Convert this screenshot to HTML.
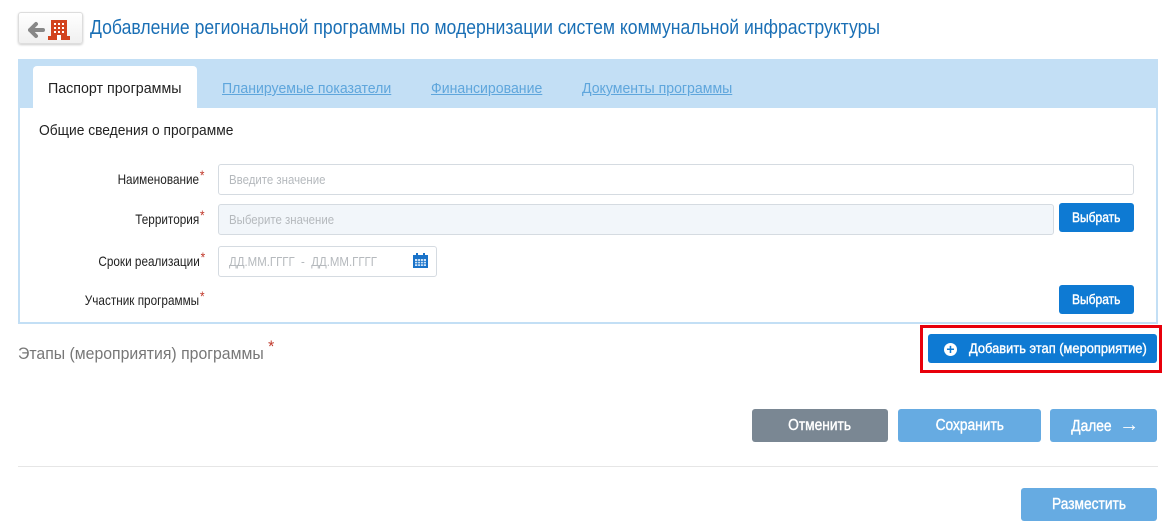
<!DOCTYPE html>
<html><head><meta charset="utf-8"><style>
*{box-sizing:border-box;margin:0;padding:0}
body{width:1166px;height:531px;background:#fff;position:relative;overflow:hidden;font-family:"Liberation Sans","Noto Sans CJK SC",sans-serif;color:#222}
.a{position:absolute;white-space:nowrap}
.btn{position:absolute;color:#fff;border-radius:3px;text-align:center;font-size:15px;white-space:nowrap}
.btn span.t{display:inline-block;transform:scaleX(.86);-webkit-text-stroke:.4px #fff}
.lbl{position:absolute;right:961px;font-size:14px;color:#222;transform:scaleX(.84);transform-origin:right center;white-space:nowrap}
.lbl b{color:#c0392b;font-weight:normal;position:relative;top:-4px;margin-left:1px}
.inp{position:absolute;border:1px solid #d5dbe1;border-radius:3px;background:#fff;font-size:13px;color:#b5b9bd;padding-left:10px;white-space:nowrap}
.inp span{display:inline-block;transform:scaleX(.88);transform-origin:left center}
.tab{position:absolute;top:80px;font-size:15px;color:#5fa6dc;text-decoration:underline;transform:scaleX(.94);transform-origin:left center;white-space:nowrap}
</style></head><body>
<div class="a" style="left:18px;top:12px;width:65px;height:32px;border:1px solid #ddd;border-radius:3px;background:linear-gradient(#fff,#f0f0f0);box-shadow:0 1px 2px #ccc"></div>
<svg class="a" style="left:28px;top:19px" width="50" height="22" viewBox="0 0 50 22">
<path d="M2 11 L8 5 M2 11 L8 17 M2 11 H15" stroke="#888" stroke-width="4" fill="none" stroke-linecap="round"/>
<rect x="23" y="1" width="16" height="20" fill="#d2431f"/><rect x="20" y="17" width="22" height="4" fill="#d2431f"/>
<g fill="#fff"><rect x="26" y="4" width="2" height="2"/><rect x="30" y="4" width="2" height="2"/><rect x="34" y="4" width="2" height="2"/><rect x="26" y="8" width="2" height="2"/><rect x="30" y="8" width="2" height="2"/><rect x="34" y="8" width="2" height="2"/><rect x="26" y="12" width="2" height="2"/><rect x="30" y="12" width="2" height="2"/><rect x="34" y="12" width="2" height="2"/><rect x="29" y="16" width="4" height="5"/></g></svg>
<div class="a" style="left:90px;top:17px;font-size:20px;color:#1a6fb5;transform:scaleX(.88);transform-origin:left center">Добавление региональной программы по модернизации систем коммунальной инфраструктуры</div>
<div class="a" style="left:18px;top:59px;width:1140px;height:265px;background:#c3dff5;border:2px solid #c3dff5"></div>
<div class="a" style="left:20px;top:108px;width:1136px;height:214px;background:#fff"></div>
<div class="a" style="left:33px;top:66px;width:164px;height:43px;background:#fff;border-radius:4px 4px 0 0"></div>
<div class="a" style="left:48px;top:80px;font-size:15px;color:#222;transform:scaleX(.95);transform-origin:left center">Паспорт программы</div>
<div class="tab" style="left:222px">Планируемые показатели</div>
<div class="tab" style="left:431px">Финансирование</div>
<div class="tab" style="left:582px">Документы программы</div>
<div class="a" style="left:39px;top:122px;font-size:15px;transform:scaleX(.92);transform-origin:left center">Общие сведения о программе</div>
<div class="lbl" style="top:171px">Наименование<b>*</b></div>
<div class="lbl" style="top:211px">Территория<b>*</b></div>
<div class="lbl" style="top:253px">Сроки реализации<b>*</b></div>
<div class="lbl" style="top:292px">Участник программы<b>*</b></div>
<div class="inp" style="left:218px;top:164px;width:916px;height:31px;line-height:29px"><span>Введите значение</span></div>
<div class="inp" style="left:218px;top:204px;width:836px;height:31px;line-height:29px;background:#f2f6fa"><span>Выберите значение</span></div>
<div class="btn" style="left:1059px;top:203px;width:75px;height:29px;line-height:29px;background:#0e7ad3;font-size:14px"><span class="t">Выбрать</span></div>
<div class="inp" style="left:218px;top:246px;width:219px;height:31px;line-height:29px"><span>ДД.ММ.ГГГГ &nbsp;- &nbsp;ДД.ММ.ГГГГ</span></div>
<svg class="a" style="left:413px;top:253px" width="15" height="15" viewBox="0 0 15 15"><rect x="0" y="2" width="15" height="13" fill="#1a73c9"/><rect x="2" y="6" width="11" height="7" fill="#cfe3f7"/><path d="M2 8.5H13M2 10.8H13M4.7 6V13M7.5 6V13M10.3 6V13" stroke="#1a73c9" stroke-width=".8"/><rect x="3" y="0" width="2" height="3" fill="#1a73c9"/><rect x="10" y="0" width="2" height="3" fill="#1a73c9"/></svg>
<div class="btn" style="left:1059px;top:285px;width:75px;height:29px;line-height:29px;background:#0e7ad3;font-size:14px"><span class="t">Выбрать</span></div>
<div class="a" style="left:18px;top:344px;font-size:17px;color:#777;transform:scaleX(.93);transform-origin:left center">Этапы (мероприятия) программы <span style="color:#c0392b;position:relative;top:-7px">*</span></div>
<div class="a" style="left:920px;top:325px;width:242px;height:48px;border:3px solid #e8000b"></div>
<div class="btn" style="left:928px;top:334px;width:229px;height:29px;line-height:29px;background:#0e7ad3;font-size:14px;text-align:left;padding-left:16px"><span style="display:inline-block;width:13px;height:13px;border-radius:50%;background:#fff;color:#0e7ad3;line-height:13px;font-size:14px;font-weight:bold;vertical-align:-1px;margin-right:12px;text-align:center">+</span><span class="t" style="transform-origin:left center;transform:scaleX(.92)">Добавить этап (мероприятие)</span></div>
<div class="btn" style="left:752px;top:409px;width:136px;height:33px;line-height:33px;background:#7a8793;font-size:16px"><span class="t">Отменить</span></div>
<div class="btn" style="left:898px;top:409px;width:143px;height:33px;line-height:33px;background:#66abe2;font-size:16px"><span class="t">Сохранить</span></div>
<div class="btn" style="left:1050px;top:409px;width:107px;height:33px;line-height:33px;background:#66abe2;font-size:16px"><span class="t">Далее</span> <span style="font-size:20px">→</span></div>
<div class="a" style="left:18px;top:466px;width:1140px;height:1px;background:#e6e6e6"></div>
<div class="btn" style="left:1021px;top:488px;width:136px;height:33px;line-height:33px;background:#66abe2;font-size:16px"><span class="t">Разместить</span></div>
</body></html>
